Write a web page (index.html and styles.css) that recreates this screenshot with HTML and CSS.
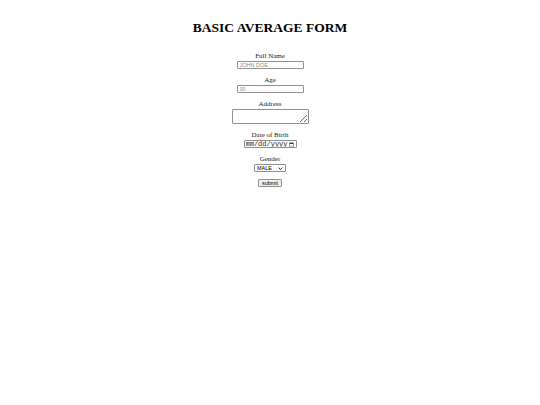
FILE: index.html
```html
<!DOCTYPE html>
<html lang="en">
<head>
<meta charset="utf-8">
<title>Basic Average Form</title>
<link rel="stylesheet" href="styles.css">
</head>
<body>
<h1 class="title">BASIC AVERAGE FORM</h1>
<form class="form">
  <div class="field">
    <label class="label" for="name">Full Name</label>
    <input class="text-input" type="text" id="name" placeholder="JOHN DOE">
  </div>
  <div class="field">
    <label class="label" for="age">Age</label>
    <input class="text-input" type="text" id="age" placeholder="00">
  </div>
  <div class="field">
    <label class="label" for="address">Address</label>
    <textarea class="textarea" id="address"></textarea>
  </div>
  <div class="field">
    <label class="label" for="dob">Date of Birth</label>
    <input class="date-input" type="date" id="dob">
  </div>
  <div class="field">
    <label class="label" for="gender">Gender</label>
    <select class="select" id="gender">
      <option>MALE</option>
      <option>FEMALE</option>
    </select>
  </div>
  <div class="field">
    <button class="submit" type="submit">submit</button>
  </div>
</form>
</body>
</html>
```

FILE: styles.css
```css
body {
  margin: 0;
  background: #ffffff;
  color: #000000;
  font-family: "Liberation Serif", "Times New Roman", serif;
}

.title {
  margin: 19px 0 0;
  font-size: 13.5px;
  line-height: 17px;
  font-weight: bold;
  text-align: center;
}

.form {
  display: flex;
  flex-direction: column;
  align-items: center;
  gap: 7px;
  margin-top: 16px;
}

.field {
  display: flex;
  flex-direction: column;
  align-items: center;
}

.label {
  font-size: 7px;
  line-height: 9px;
  color: #1a1a1a;
}

.text-input,
.textarea,
.date-input,
.select,
.submit {
  box-sizing: border-box;
  margin: 0;
  font-family: "Liberation Sans", Arial, sans-serif;
  font-size: 5.5px;
  border: 1px solid #8f8f8f;
  border-radius: 1px;
  background: #ffffff;
  color: #000000;
  outline: none;
}

.text-input {
  width: 67px;
  height: 8px;
  padding: 0 2px;
}

.text-input::placeholder {
  color: #8a8a8a;
}

.textarea {
  width: 77px;
  height: 15px;
  padding: 1px;
  resize: both;
}

.date-input {
  width: 53px;
  height: 8px;
  padding: 0 1px;
  font-family: "Liberation Mono", "Courier New", monospace;
  font-size: 7px;
  line-height: 6px;
}

.date-input::-webkit-datetime-edit,
.date-input::-webkit-datetime-edit-fields-wrapper {
  padding: 0;
}

.date-input::-webkit-datetime-edit-month-field,
.date-input::-webkit-datetime-edit-day-field,
.date-input::-webkit-datetime-edit-year-field,
.date-input::-webkit-datetime-edit-text {
  padding: 0;
  color: #1a1a1a;
}

.date-input::-webkit-calendar-picker-indicator {
  width: 5px;
  height: 5px;
  padding: 0;
  margin: 0 1px 0 0;
  background-size: 5px 5px;
}

.select {
  -webkit-appearance: none;
  appearance: none;
  width: 32px;
  height: 8px;
  padding: 0 0 0 2px;
  line-height: 6px;
  background-image: url("data:image/svg+xml,%3Csvg xmlns='http://www.w3.org/2000/svg' viewBox='0 0 8 5'%3E%3Cpath d='M1 1l3 3 3-3' fill='none' stroke='%23000' stroke-width='1.4'/%3E%3C/svg%3E");
  background-repeat: no-repeat;
  background-position: right 2px center;
  background-size: 5px 3px;
}

.submit {
  width: 24px;
  height: 8px;
  padding: 0;
  font-size: 5.5px;
  line-height: 6px;
  background: #efefef;
}
```
